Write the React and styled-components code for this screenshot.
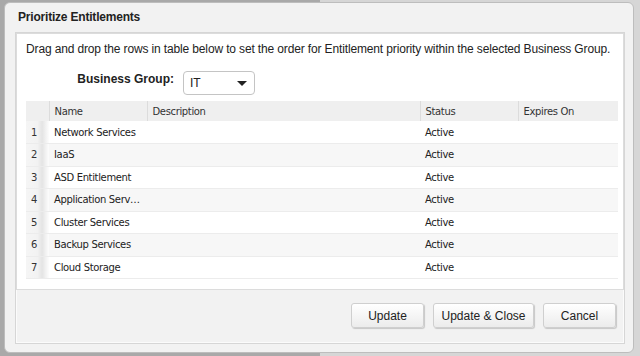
import React from "react";
import styled, { createGlobalStyle } from "styled-components";

const rows = [
  "Network Services",
  "IaaS",
  "ASD Entitlement",
  "Application Services",
  "Cluster Services",
  "Backup Services",
  "Cloud Storage",
];

export default function App() {
  return (
    <Page>
      <GlobalStyle />
      <Dialog>
        <Title>Prioritize Entitlements</Title>
        <Frame>
          <Panel>
            <Intro>
              Drag and drop the rows in table below to set the order for Entitlement priority
              within the selected Business Group.
            </Intro>
            <GroupRow>
              <Label>Business Group:</Label>
              <Select>
                <span>IT</span>
                <Caret />
              </Select>
            </GroupRow>
            <Table>
              <colgroup>
                <col style={{ width: 23 }} />
                <col style={{ width: 98 }} />
                <col style={{ width: 273 }} />
                <col style={{ width: 98 }} />
                <col style={{ width: 100 }} />
              </colgroup>
              <thead>
                <tr>
                  <Th />
                  <Th>Name</Th>
                  <Th>Description</Th>
                  <Th>Status</Th>
                  <Th>Expires On</Th>
                </tr>
              </thead>
              <tbody>
                {rows.map((name, i) => (
                  <Row key={name} $odd={i % 2 === 1}>
                    <NumCell>{i + 1}</NumCell>
                    <Td>{name}</Td>
                    <Td />
                    <Td>Active</Td>
                    <Td />
                  </Row>
                ))}
              </tbody>
            </Table>
          </Panel>
          <Footer>
            <Button>Update</Button>
            <Button $wide>Update &amp; Close</Button>
            <Button>Cancel</Button>
          </Footer>
        </Frame>
      </Dialog>
    </Page>
  );
}

const GlobalStyle = createGlobalStyle`
  html, body {
    margin: 0;
    padding: 0;
    background: linear-gradient(to right, #a9a9a9 50%, #d6d6d6 50%);
    font-family: "Liberation Sans", Arial, sans-serif;
  }
`;

const Page = styled.div`
  width: 640px;
  height: 356px;
  box-sizing: border-box;
  padding: 2px 6px 3px 4px;
`;

const Dialog = styled.div`
  width: 630px;
  height: 351px;
  box-sizing: border-box;
  background: #f2f2f2;
  border: 1px solid #bdbdbd;
  border-radius: 6px;
  padding: 0 8px 0 10px;
  display: flex;
  flex-direction: column;
`;

const Title = styled.div`
  height: 29px;
  line-height: 28px;
  padding-left: 3px;
  font-size: 12px;
  font-weight: bold;
  letter-spacing: -0.2px;
  color: #222;
`;

const Frame = styled.div`
  border: 1px solid #d6d6d6;
  box-shadow: inset 0 0 0 1px #fbfbfb;
  padding: 0 2px 2px 1px;
  height: 312px;
  box-sizing: border-box;
  display: flex;
  flex-direction: column;
`;

const Panel = styled.div`
  background: #fff;
  border: 1px solid #dcdcdc;
  margin: 0 -2px 0 -1px;
  height: 257px;
  box-sizing: border-box;
  padding: 0 7px 0 9px;
`;

const Intro = styled.div`
  font-size: 12px;
  letter-spacing: -0.14px;
  color: #222;
  margin-top: 8px;
  line-height: 15px;
  white-space: nowrap;
`;

const GroupRow = styled.div`
  display: flex;
  align-items: center;
  margin-top: 14px;
  height: 24px;
`;

const Label = styled.div`
  width: 148px;
  text-align: right;
  font-size: 12px;
  font-weight: bold;
  color: #222;
  margin-top: -8px;
`;

const Select = styled.div`
  margin-left: 9px;
  width: 72px;
  height: 24px;
  box-sizing: border-box;
  border: 1px solid #c4c4c4;
  border-radius: 4px;
  display: flex;
  align-items: center;
  justify-content: space-between;
  padding: 0 7px 0 6px;
  font-size: 12px;
  color: #222;
`;

const Caret = styled.span`
  width: 0;
  height: 0;
  border-left: 5px solid transparent;
  border-right: 5px solid transparent;
  border-top: 5px solid #222;
`;

const Table = styled.table`
  margin-top: 6px;
  width: 592px;
  border-collapse: collapse;
  table-layout: fixed;
  font-family: Tahoma, "DejaVu Sans", sans-serif;
  font-size: 10px;
  letter-spacing: -0.35px;
  color: #222;
`;

const Th = styled.th`
  height: 20px;
  padding: 0 5px;
  background: #efefef;
  border-right: 1px solid #dcdcdc;
  font-weight: normal;
  text-align: left;
  color: #333;
  &:last-child {
    border-right: none;
  }
`;

const Row = styled.tr`
  height: 22.5px;
  background: ${(p) => (p.$odd ? "#f7f7f7" : "#fff")};
  border-bottom: 1px solid #ececec;
`;

const Td = styled.td`
  padding: 0 5px;
  white-space: nowrap;
  overflow: hidden;
  text-overflow: ellipsis;
`;

const NumCell = styled.td`
  padding: 0 0 0 5px;
  color: #333;
  background: linear-gradient(to right, #f5f5f5 0%, #f2f2f2 50%, #e4e4e4 70%, #fdfdfd 100%);
`;

const Footer = styled.div`
  flex: 1;
  display: flex;
  justify-content: flex-end;
  align-items: flex-start;
  gap: 9px;
  padding: 13px 6px 0 0;
`;

const Button = styled.button`
  width: ${(p) => (p.$wide ? "101px" : "73px")};
  height: 25px;
  border: 1px solid #cfcfcf;
  border-radius: 3px;
  background: linear-gradient(#ffffff, #ececec);
  box-shadow: 1px 1px 1px rgba(0, 0, 0, 0.18);
  font-family: "Liberation Sans", Arial, sans-serif;
  font-size: 12px;
  color: #222;
  padding: 0;
`;
